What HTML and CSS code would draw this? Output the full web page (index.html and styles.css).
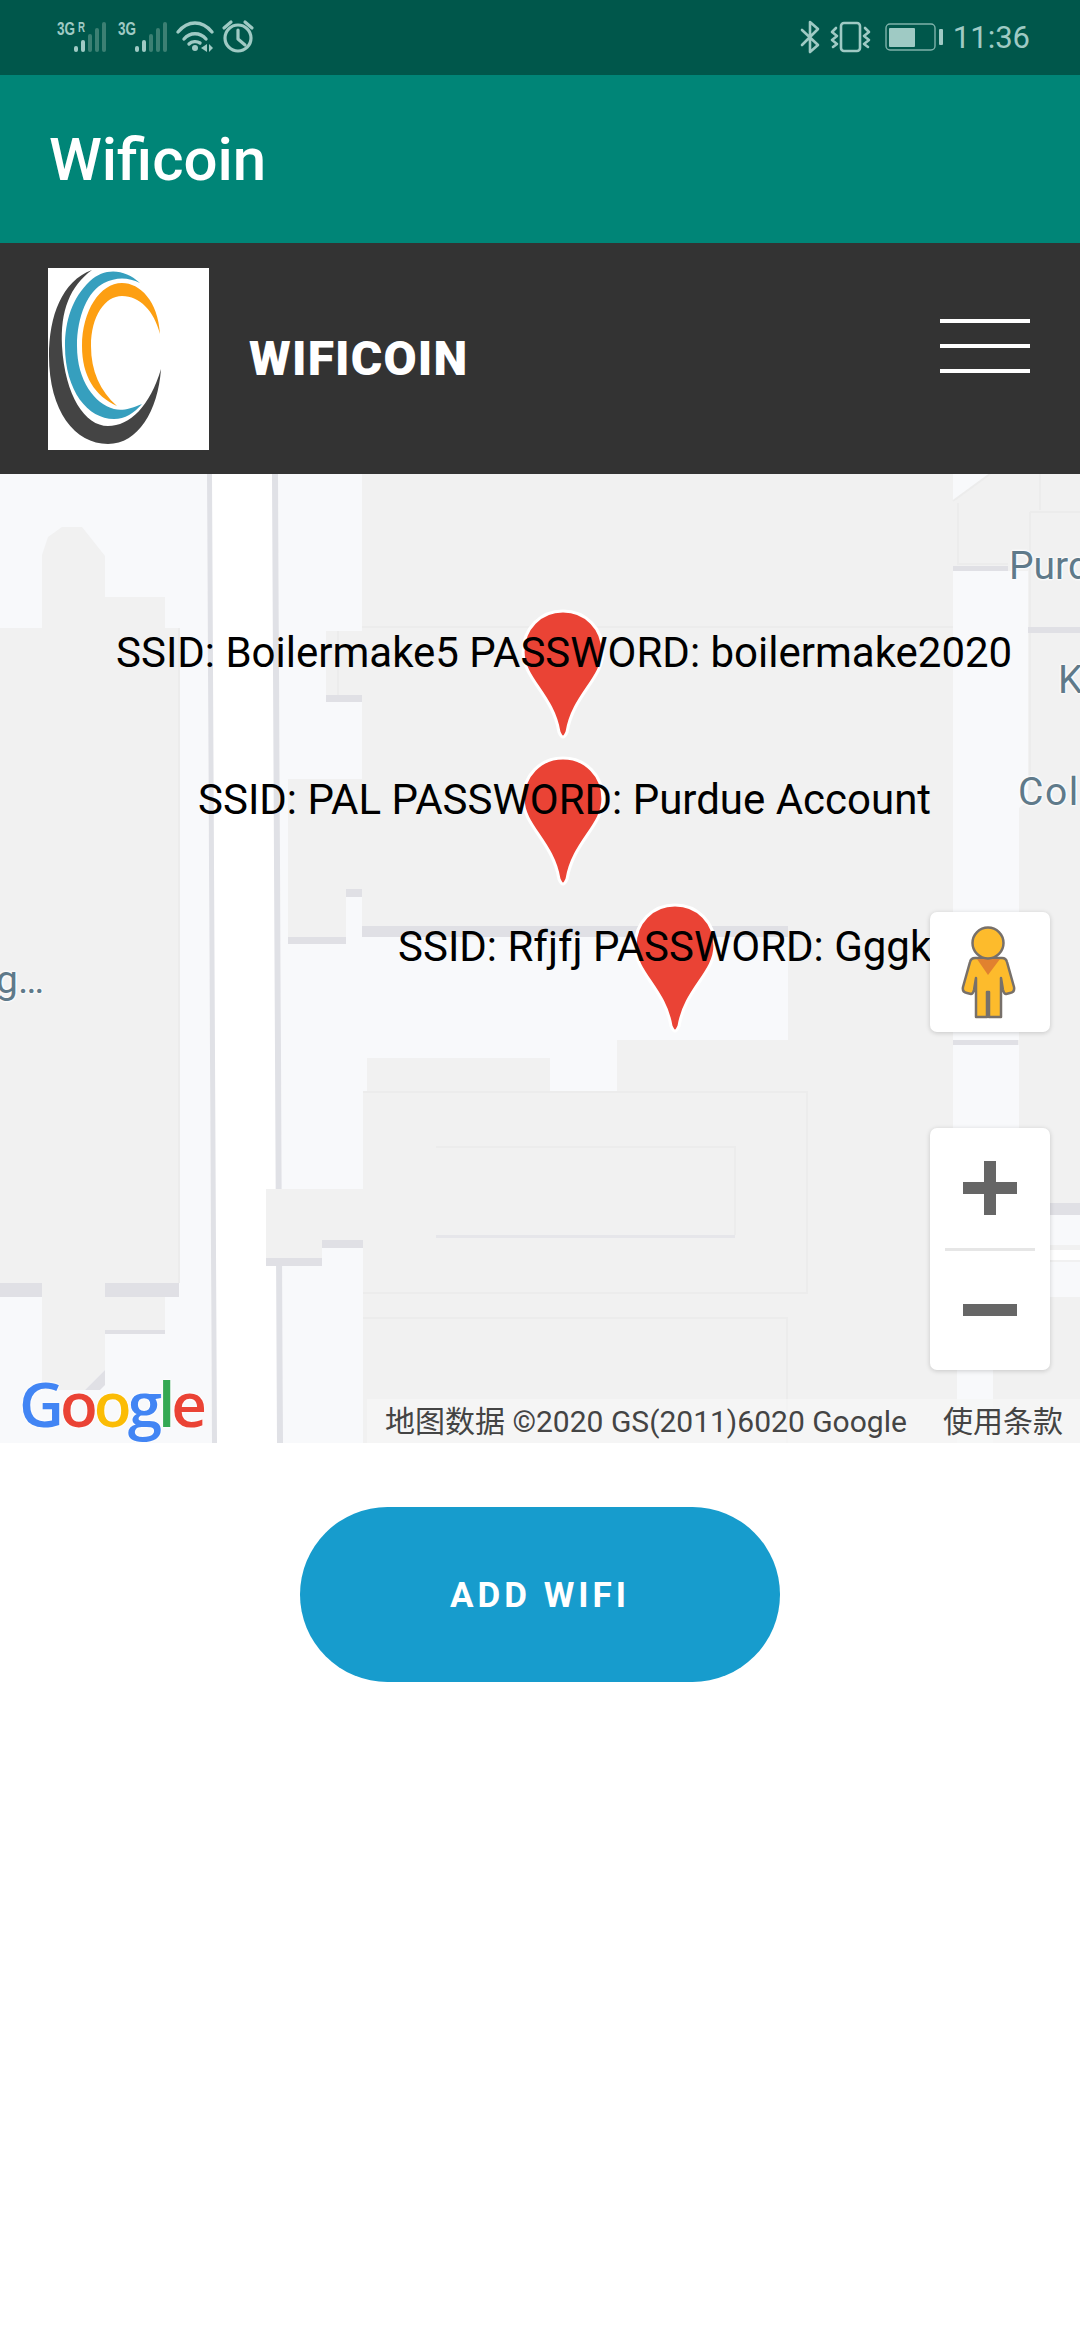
FILE: index.html
```html
<!DOCTYPE html>
<html>
<head>
	<title>Wificoin</title>
	<link rel="stylesheet" href="styles.css">
</head>
<body>
	<div class="status">
		<svg class="status-icons" viewBox="0 0 1080 75" width="1080" height="75">
			<g class="st-text">
				<text x="57" y="35" font-size="19" textLength="18" lengthAdjust="spacingAndGlyphs">3G</text>
				<text x="78" y="32" font-size="15" textLength="7" lengthAdjust="spacingAndGlyphs">R</text>
				<text x="118" y="35" font-size="19" textLength="18" lengthAdjust="spacingAndGlyphs">3G</text>
			</g>
			<g class="st-on">
				<rect x="74" y="46" width="4" height="6" rx="2"/>
				<rect x="81" y="40" width="4" height="12" rx="2"/>
				<rect x="135" y="46" width="4" height="6" rx="2"/>
				<rect x="142" y="40" width="4" height="12" rx="2"/>
			</g>
			<g class="st-dim">
				<rect x="88" y="34" width="4" height="18" rx="2"/>
				<rect x="95" y="28" width="4" height="24" rx="2"/>
				<rect x="102" y="22" width="4" height="30" rx="2"/>
				<rect x="149" y="34" width="4" height="18" rx="2"/>
				<rect x="156" y="28" width="4" height="24" rx="2"/>
				<rect x="163" y="22" width="4" height="30" rx="2"/>
			</g>
			<!-- wifi -->
			<g class="st-line" stroke-width="3.4">
				<path d="M178 32 C188 20 202 20 212 32"/>
				<path d="M184 39 C190 32 200 32 206 39"/>
				<path d="M189 44 C192 41 197 41 200 43"/>
			</g>
			<g class="st-on">
				<circle cx="195" cy="48" r="3"/>
				<path d="M207 44 V52 L201 48Z M209 44 L209 52 L213 48Z"/>
			</g>
			<!-- alarm -->
			<g class="st-line" stroke-width="3.2">
				<circle cx="238" cy="38" r="13"/>
				<path d="M238 30 V39 L245 45"/>
				<path d="M224 28 L231 22"/>
				<path d="M252 28 L245 22"/>
			</g>
			<!-- bluetooth -->
			<path class="st-line" stroke-width="2.6" d="M802 30 L818 45 L810 52 V22 L818 29 L802 45"/>
			<!-- vibrate -->
			<g class="st-line" stroke-width="2.6">
				<rect x="841" y="23" width="19" height="28" rx="3"/>
				<path d="M836 28 L832 32 L837 36 L832 40 L837 44 L833 47"/>
				<path d="M865 28 L869 32 L864 36 L869 40 L864 44 L868 47"/>
			</g>
			<!-- battery -->
			<rect class="st-line st-faint" stroke-width="1.4" x="886" y="24" width="49" height="26" rx="4"/>
			<g class="st-on">
				<rect x="889" y="28" width="26" height="19" rx="1"/>
				<rect x="939" y="29" width="4" height="16" rx="1"/>
			</g>
		</svg>
		<span class="clock">11:36</span>
	</div>

	<div class="appbar">Wificoin</div>

	<div class="nav">
		<div class="logo">
			<svg viewBox="48 267 161 182" width="161" height="182">
				<path fill="#444" d="M92 269 C62 280 49 315 49 355 C49 410 75 443 108 443 C138 443 158 410 161 368 C150 405 130 425 108 425 C85 425 65 395 62 345 C60 310 70 285 92 269Z"/>
				<path fill="#369fbe" d="M140 282 C125 268 105 266 90 280 C72 297 65 320 65 345 C65 390 88 418 114 418 C125 418 134 412 142 403 C130 408 122 410 114 408 C95 403 77 380 77 345 C77 315 88 290 104 282 C116 276 128 276 140 282Z"/>
				<path fill="#fd9f12" d="M160 333 C158 300 140 282 122 282 C100 282 82 310 82 345 C82 375 95 395 117 405 C100 390 91 370 91 345 C91 315 105 295 122 295 C140 295 154 310 160 333Z"/>
			</svg>
		</div>
		<div class="brand">WIFICOIN</div>
		<div class="burger"><i></i><i></i><i></i></div>
	</div>

	<div class="map">
		<svg class="map-bg" viewBox="0 474 1080 969" width="1080" height="969">
			<!-- road -->
			<path fill="#fff" d="M207 474 H278 L283 1443 H212Z"/>
			<path fill="#e0e1e6" d="M207 474 H212 L217 1443 H212Z M272 474 H278 L283 1443 H277Z"/>
			<g class="bld">
				<path d="M0 628 H42 V555 L48 537 L62 527 H82 L105 556 V597 H165 V628 H179 V1283 H105 V1297 H165 V1330 H105 V1370 L85 1390 H42 V1283 H0Z"/>
				<rect x="362" y="474" width="426" height="452"/>
				<rect x="788" y="474" width="292" height="969"/>
				<rect x="326" y="631" width="36" height="64"/>
				<rect x="288" y="779" width="74" height="110"/>
				<rect x="288" y="889" width="58" height="48"/>
				<rect x="266" y="1189" width="97" height="51"/>
				<rect x="266" y="1240" width="56" height="18"/>
				<rect x="367" y="1058" width="183" height="34"/>
				<rect x="617" y="1040" width="174" height="52"/>
				<rect x="363" y="1092" width="445" height="351"/>
			</g>
			<g class="shade">
				<rect x="0" y="1283" width="42" height="14"/>
				<rect x="105" y="1283" width="74" height="14"/>
				<rect x="105" y="1330" width="60" height="4"/>
				<rect x="326" y="695" width="36" height="7"/>
				<rect x="346" y="889" width="16" height="8"/>
				<rect x="288" y="937" width="58" height="7"/>
				<rect x="362" y="926" width="426" height="11"/>
				<rect x="322" y="1240" width="41" height="8"/>
				<rect x="266" y="1258" width="56" height="8"/>
				<path d="M105 1370 L85 1390 H100 L105 1385Z"/>
				<rect x="953" y="566" width="55" height="5"/>
				<rect x="1028" y="627" width="52" height="6"/>
				<rect x="953" y="1040" width="65" height="5"/>
				<rect x="1050" y="1203" width="30" height="12"/>
			</g>
			<rect class="shade-soft" x="436" y="1235" width="299" height="3"/>
			<!-- right hand strip and blocks -->
			<path class="land" d="M953 571 H1028 V800 L1019 808 V1040 H953Z"/>
			<path class="land" d="M953 1045 H1019 V1370 H993 V1443 H957 V1370 H953Z"/>
			<path class="land" d="M953 474 H990 L953 501Z"/>
			<rect class="land" x="1050" y="1215" width="30" height="30"/>
			<rect class="land" x="1050" y="1262" width="30" height="35"/>
			<rect fill="#fff" x="1050" y="1250" width="30" height="10"/>
			<g class="edge">
				<path d="M953 501 L990 474"/>
				<path d="M958 503 V564 H1008"/>
				<path d="M1030 512 V627"/>
				<path d="M1030 512 H1080"/>
				<path d="M1040 474 V510"/>
				<path d="M1030 633 V790"/>
				<path d="M362 627 H953"/>
				<path d="M363 1092 H807 V1293 H363"/>
				<path d="M363 1318 H787 V1443"/>
				<path d="M436 1147 H735 V1235"/>
				<path d="M179 628 V1283"/>
				<path d="M338 631 V695"/>
			</g>
		</svg>

		<span class="place place-purd">Purdue</span>
		<span class="place place-k">K</span>
		<span class="place place-col">Col</span>
		<span class="place place-g">g…</span>

		<svg class="pin pin-a" viewBox="0 0 84 128" width="86" height="131"><path d="M42 2 C20 2 3 19 3 42 C3 68 32 84 38 120 Q42 130 46 120 C52 84 81 68 81 42 C81 19 64 2 42 2Z"/></svg>
		<svg class="pin pin-b" viewBox="0 0 84 128" width="86" height="131"><path d="M42 2 C20 2 3 19 3 42 C3 68 32 84 38 120 Q42 130 46 120 C52 84 81 68 81 42 C81 19 64 2 42 2Z"/></svg>
		<svg class="pin pin-c" viewBox="0 0 84 128" width="86" height="131"><path d="M42 2 C20 2 3 19 3 42 C3 68 32 84 38 120 Q42 130 46 120 C52 84 81 68 81 42 C81 19 64 2 42 2Z"/></svg>

		<span class="marker marker-a">SSID: Boilermake5 PASSWORD: boilermake2020</span>
		<span class="marker marker-b">SSID: PAL PASSWORD: Purdue Account</span>
		<span class="marker marker-c">SSID: Rfjfj PASSWORD: Gggk</span>

		<div class="ctl pegman">
			<svg viewBox="0 0 120 120" width="120" height="120">
				<path fill="#fdbb2c" stroke="#77706a" stroke-width="2.5" stroke-linejoin="round" d="M45 46 Q41 46 40 50 L33 75 Q32 80 37 81 L41 82 Q43 82 44 78 L46 66 V105 H57 V80 H59 V105 H71 V66 L73 78 Q74 82 76 82 L80 81 Q85 80 84 75 L77 50 Q76 46 72 46Z"/>
				<path fill="#e1812f" d="M47 47 H70 L58 63Z"/>
				<circle cx="58" cy="31" r="15.500" fill="#fdbb2c" stroke="#77706a" stroke-width="2.5"/>
			</svg>
		</div>
		<div class="ctl zoom">
			<div class="zoom-btn"><svg viewBox="0 0 54 54" width="54" height="54"><path fill="#666" d="M21 0 H33 V21 H54 V33 H33 V54 H21 V33 H0 V21 H21Z"/></svg></div>
			<div class="zoom-sep"></div>
			<div class="zoom-btn"><svg viewBox="0 0 54 12" width="54" height="12"><rect width="54" height="12" fill="#666"/></svg></div>
		</div>

		<div class="google"><span class="g-b">G</span><span class="g-r">o</span><span class="g-y">o</span><span class="g-b">g</span><span class="g-g">l</span><span class="g-r">e</span></div>
		<div class="credit">
			<span>地图数据 ©2020 GS(2011)6020 Google</span>
			<span>使用条款</span>
		</div>
	</div>

	<div class="actions">
		<a class="add-btn">ADD WIFI</a>
	</div>
</body>
</html>
```

FILE: styles.css
```css
*{
	margin: 0;
	padding: 0;
	box-sizing: border-box;
}
body{
	width: 1080px;
	height: 2340px;
	background: #fff;
	font-family: Roboto, "Noto Sans CJK SC", sans-serif;
	overflow: hidden;
}

/* status bar */
.status{
	height: 75px;
	background: #00574b;
	position: relative;
	display: flex;
	justify-content: flex-end;
	align-items: center;
	padding-right: 50px;
}
.status-icons{
	position: absolute;
	left: 0;
	top: 0;
}
.st-text{
	fill: #9fcac4;
	font-family: "Liberation Sans", sans-serif;
	font-weight: bold;
}
.st-on{
	fill: #9fcac4;
}
.st-dim{
	fill: #3c8073;
}
.st-line{
	fill: none;
	stroke: #9fcac4;
	stroke-linecap: round;
	stroke-linejoin: round;
}
.st-faint{
	stroke: #7fb3ab;
}
.clock{
	font-size: 31px;
	color: #9fcac4;
}

/* app bar */
.appbar{
	height: 168px;
	background: #008577;
	color: #fff;
	font-size: 60px;
	font-weight: 500;
	display: flex;
	align-items: center;
	padding-left: 49px;
}

/* nav */
.nav{
	height: 231px;
	background: #333;
	display: flex;
	align-items: center;
	padding: 0 50px 0 48px;
}
.logo{
	width: 161px;
	height: 182px;
	background: #fff;
}
.logo svg{
	display: block;
}
.brand{
	margin-left: 40px;
	color: #fff;
	font-size: 48px;
	font-weight: 900;
	letter-spacing: 1.200px;
}
.burger{
	margin-left: auto;
	margin-bottom: 26px;
	width: 90px;
	display: flex;
	flex-direction: column;
	gap: 21px;
}
.burger i{
	display: block;
	height: 4px;
	background: #fff;
}

/* map */
.map{
	height: 969px;
	position: relative;
	overflow: hidden;
	background: #f8f9fb;
}
.map-bg{
	position: absolute;
	left: 0;
	top: 0;
}
.bld{
	fill: #f1f1f1;
}
.shade{
	fill: #e0e0e5;
}
.shade-soft{
	fill: #e6e6ea;
}
.land{
	fill: #f8f9fb;
}
.edge{
	fill: none;
	stroke: #ececec;
	stroke-width: 2;
}
.place{
	position: absolute;
	font-size: 39px;
	color: #5f7a8a;
	line-height: 46px;
	text-shadow: 0 0 3px #fff, 0 0 3px #fff, 0 0 3px #fff;
	white-space: nowrap;
}
.place-purd{ left: 1009px; top: 69px; }
.place-k{ left: 1058px; top: 183px; }
.place-col{ left: 1018px; top: 295px; letter-spacing: 1.500px; }
.place-g{ left: -4px; top: 483px; }

.pin{
	position: absolute;
}
.pin path{
	fill: #ea4335;
	stroke: #fff;
	stroke-width: 3;
}
.pin-a{ left: 520px; top: 135px; }
.pin-b{ left: 520px; top: 282px; }
.pin-c{ left: 632px; top: 429px; }

.marker{
	position: absolute;
	color: #000;
	font-size: 42px;
	line-height: 50px;
	white-space: nowrap;
}
.marker-a{ left: 116px; top: 154px; }
.marker-b{ left: 198px; top: 301px; }
.marker-c{ left: 398px; top: 448px; }

.ctl{
	position: absolute;
	left: 930px;
	width: 120px;
	background: #fff;
	border-radius: 7px;
	box-shadow: 0 1px 5px rgba(0,0,0,0.18);
}
.pegman{
	top: 438px;
	height: 120px;
}
.pegman svg{
	display: block;
}
.zoom{
	top: 654px;
	height: 242px;
	display: flex;
	flex-direction: column;
	align-items: center;
}
.zoom-btn{
	flex: 1;
	display: flex;
	align-items: center;
	justify-content: center;
}
.zoom-sep{
	width: 90px;
	height: 3px;
	background: #e6e6e6;
}
.google{
	position: absolute;
	left: 19px;
	top: 889px;
	font-family: "Open Sans", sans-serif;
	font-size: 62px;
	font-weight: 600;
	line-height: 80px;
	letter-spacing: -4px;
	text-shadow: 0 0 3px #fff, 0 0 3px #fff;
}
.g-b{ color: #4285f4; }
.g-r{ color: #ea4335; }
.g-y{ color: #fbbc05; }
.g-g{ color: #34a853; }
.credit{
	position: absolute;
	right: 0;
	bottom: 0;
	height: 44px;
	width: 713px;
	padding: 0 17px 4px 18px;
	display: flex;
	justify-content: space-between;
	align-items: center;
	background: rgba(245,245,245,0.75);
	font-size: 30px;
	color: #444;
	white-space: nowrap;
}

/* button */
.actions{
	display: flex;
	justify-content: center;
	padding-top: 64px;
}
.add-btn{
	width: 480px;
	height: 175px;
	padding-top: 2px;
	border-radius: 88px;
	background: #179ccd;
	color: #fff;
	font-size: 35px;
	font-weight: 700;
	letter-spacing: 4px;
	display: flex;
	align-items: center;
	justify-content: center;
}
```
